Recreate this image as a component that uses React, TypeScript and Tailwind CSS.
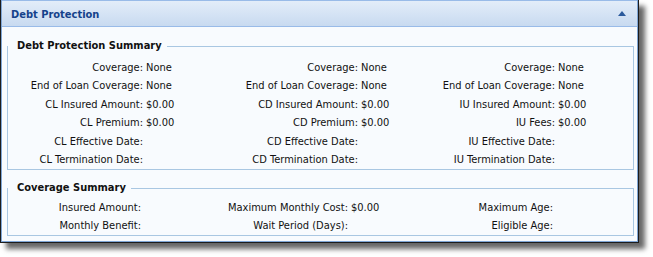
const font = "font-['DejaVu_Sans_Condensed','Liberation_Sans',sans-serif]";

type Cell = {label: string; value?: string};

const debtRows: Cell[][] = [
  [{label: 'Coverage:', value: 'None'}, {label: 'Coverage:', value: 'None'}, {label: 'Coverage:', value: 'None'}],
  [
    {label: 'End of Loan Coverage:', value: 'None'},
    {label: 'End of Loan Coverage:', value: 'None'},
    {label: 'End of Loan Coverage:', value: 'None'},
  ],
  [
    {label: 'CL Insured Amount:', value: '$0.00'},
    {label: 'CD Insured Amount:', value: '$0.00'},
    {label: 'IU Insured Amount:', value: '$0.00'},
  ],
  [{label: 'CL Premium:', value: '$0.00'}, {label: 'CD Premium:', value: '$0.00'}, {label: 'IU Fees:', value: '$0.00'}],
  [{label: 'CL Effective Date:'}, {label: 'CD Effective Date:'}, {label: 'IU Effective Date:'}],
  [{label: 'CL Termination Date:'}, {label: 'CD Termination Date:'}, {label: 'IU Termination Date:'}],
];

const coverageRows: Cell[][] = [
  [{label: 'Insured Amount:'}, {label: 'Maximum Monthly Cost:', value: '$0.00'}, {label: 'Maximum Age:'}],
  [{label: 'Monthly Benefit:'}, {label: 'Wait Period (Days):'}, {label: 'Eligible Age:'}],
];

function Section({title, rows, cols, className}: {title: string; rows: Cell[][]; cols: string; className: string}) {
  return (
    <fieldset className={`border border-[#a9c7e2] ${className}`}>
      <legend className="ml-0 pl-[9px] pr-[5px] text-[11px] leading-[18px] font-bold text-[#111]">{title}</legend>
      <div className={`grid ${cols} text-[11px] text-[#111]`}>
        {rows.map((row, i) =>
          row.map((c, j) => (
            <div key={`${i}-${j}`} className="contents">
              <div className="text-right whitespace-nowrap">{c.label}</div>
              <div className="pl-[3px] whitespace-nowrap">{c.value ?? ''}</div>
            </div>
          )),
        )}
      </div>
    </fieldset>
  );
}

export default function App() {
  return (
    <div className={`w-[653px] h-[257px] bg-white ${font}`}>
      <div className="w-[639px] h-[243px] border-x border-b border-[#1c1c1c] shadow-[6px_6px_5px_rgba(0,0,0,0.6)]">
        <div className="h-full border border-t-0 border-[#7fa6d6] bg-[#f8fbfe] flex flex-col">
          <div className="h-[27px] shrink-0 flex items-center justify-between pt-[3px] pl-[9px] pr-[11px] border-t border-b border-[#99bbe8] bg-gradient-to-b from-[#e3edf9] to-[#c8daf0]">
            <span className="text-[11px] font-bold text-[#15428b]">Debt Protection</span>
            <svg width="8" height="5" viewBox="0 0 8 5" className="-mt-[3px]">
              <path d="M0 5 L4 0 L8 5 Z" fill="#2b5a9c" />
            </svg>
          </div>
          <div className="flex flex-col gap-[9px] pl-[5px] pr-[3px] pt-[10px]">
            <Section
              title="Debt Protection Summary"
              rows={debtRows}
              cols="grid-cols-[135px_77px_138px_62px_135px_76px] leading-[18.4px]"
              className="pt-[4px] pb-0"
            />
            <Section
              title="Coverage Summary"
              rows={coverageRows}
              cols="grid-cols-[133px_79px_128px_72px_133px_78px] leading-[18px]"
              className="pt-[2px] pb-0"
            />
          </div>
        </div>
      </div>
    </div>
  );
}
